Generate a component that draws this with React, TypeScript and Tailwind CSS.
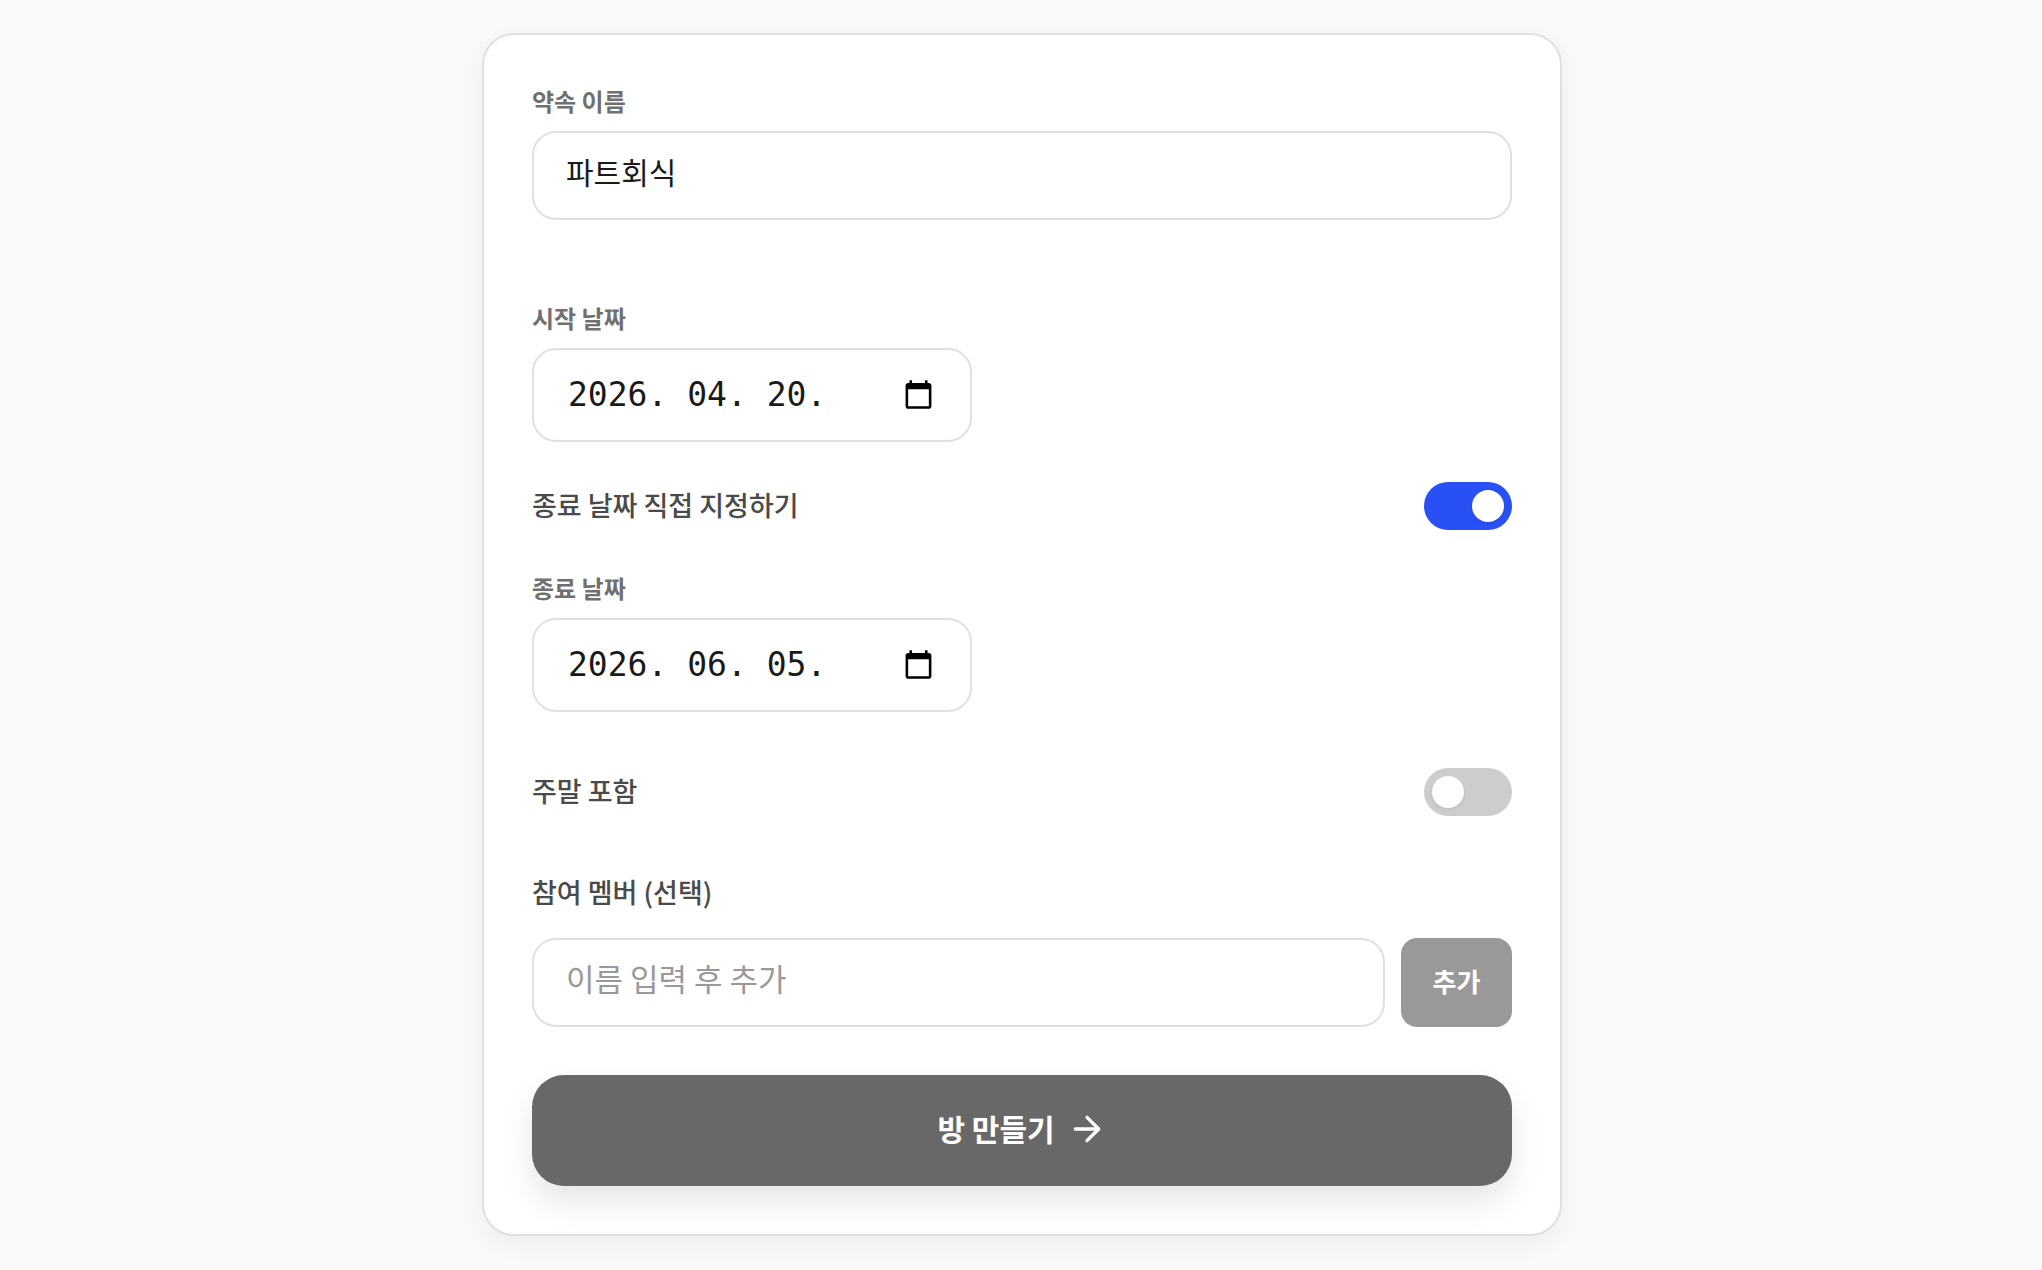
import React, { useState } from 'react';
import { ArrowRight } from 'lucide-react';

interface FieldProps {
  id: string;
  label: string;
  children: React.ReactNode;
}

const Field: React.FC<FieldProps> = ({ id, label, children }) => (
  <div className="flex flex-col gap-3">
    <label htmlFor={id} className="text-[24px] leading-9 font-bold text-[#707070]">{label}</label>
    {children}
  </div>
);

interface DateInputProps {
  id: string;
  value: string;
  onChange: (value: string) => void;
}

const DateInput: React.FC<DateInputProps> = ({ id, value, onChange }) => (
  <div className="flex items-center w-full max-w-[440px] py-5 pl-[34px] pr-9 bg-white border-2 border-[#e0e0e0] rounded-3xl">
    <input
      id={id}
      type="text"
      inputMode="numeric"
      value={value}
      onChange={e => onChange(e.target.value)}
      className="flex-1 min-w-0 bg-transparent outline-none text-[33px] leading-[50px] text-[#1a1a1a] font-['DejaVu_Sans_Mono',monospace]"
    />
    <button type="button" aria-label="달력 열기" className="shrink-0 pb-0.5">
      <svg width="31" height="31" viewBox="0 0 24 24" fill="black">
        <path d="M20 3h-1V1h-2v2H7V1H5v2H4c-1.1 0-2 .9-2 2v16c0 1.1.9 2 2 2h16c1.1 0 2-.9 2-2V5c0-1.1-.9-2-2-2zm0 18H4V8h16v13z" />
      </svg>
    </button>
  </div>
);

interface ToggleRowProps {
  label: string;
  checked: boolean;
  onChange: (checked: boolean) => void;
}

const ToggleRow: React.FC<ToggleRowProps> = ({ label, checked, onChange }) => (
  <label className="flex items-center justify-between cursor-pointer">
    <span className="pb-0.5 text-[27px] leading-10 font-medium text-[#4a4a4a]">{label}</span>
    <input
      type="checkbox"
      role="switch"
      checked={checked}
      onChange={e => onChange(e.target.checked)}
      className="appearance-none flex items-center w-[88px] h-12 px-2 rounded-full cursor-pointer bg-[#cdcdcd] checked:bg-[#2850f5] checked:justify-end before:content-[''] before:block before:size-8 before:rounded-full before:bg-white before:shadow-[0_2px_4px_rgba(0,0,0,0.06)]"
    />
  </label>
);

const inputStyle = "w-full min-w-0 pt-4 pb-6 px-8 bg-white border-2 border-[#e0e0e0] rounded-3xl outline-none text-[30px] leading-[45px] text-[#1a1a1a] placeholder:text-[31px] placeholder:text-[#999999]";

const App: React.FC = () => {
  const [name, setName] = useState('파트회식');
  const [startDate, setStartDate] = useState('2026. 04. 20.');
  const [endDate, setEndDate] = useState('2026. 06. 05.');
  const [customEnd, setCustomEnd] = useState(true);
  const [weekend, setWeekend] = useState(false);
  const [member, setMember] = useState('');

  return (
    <div className="min-h-screen pt-[33px] pb-8 pl-0.5 bg-[#f9f9f9] font-['Noto_Sans_CJK_KR',sans-serif]">
      <form
        onSubmit={e => e.preventDefault()}
        className="w-full max-w-[1080px] mx-auto p-12 flex flex-col bg-white border-2 border-[#e0e0e0] rounded-4xl shadow-[0_8px_24px_rgba(0,0,0,0.05)]"
      >
        <Field id="name" label="약속 이름">
          <input id="name" type="text" value={name} onChange={e => setName(e.target.value)} className={inputStyle} />
        </Field>

        <div className="flex flex-col gap-10 mt-20">
          <Field id="start-date" label="시작 날짜">
            <DateInput id="start-date" value={startDate} onChange={setStartDate} />
          </Field>
          <ToggleRow label="종료 날짜 직접 지정하기" checked={customEnd} onChange={setCustomEnd} />
          {customEnd && (
            <Field id="end-date" label="종료 날짜">
              <DateInput id="end-date" value={endDate} onChange={setEndDate} />
            </Field>
          )}
        </div>

        <div className="flex flex-col gap-14 mt-14">
          <ToggleRow label="주말 포함" checked={weekend} onChange={setWeekend} />
          <div className="flex flex-col gap-6">
            <label htmlFor="member" className="pb-0.5 text-[27px] leading-10 font-medium text-[#4a4a4a]">참여 멤버 (선택)</label>
            <div className="flex gap-4">
              <input
                id="member"
                type="text"
                placeholder="이름 입력 후 추가"
                value={member}
                onChange={e => setMember(e.target.value)}
                className={inputStyle}
              />
              <button type="button" className="shrink-0 w-[111px] pb-1 rounded-2xl bg-[#999999] text-[26px] font-bold text-white">추가</button>
            </div>
          </div>
        </div>

        <button
          type="submit"
          className="flex items-center justify-center gap-3 mt-12 pt-[30px] pb-[34px] rounded-4xl bg-[#686868] text-[30px] leading-[47px] font-bold text-white shadow-[0_16px_32px_rgba(0,0,0,0.1)]"
        >
          방 만들기
          <ArrowRight className="size-10" />
        </button>
      </form>
    </div>
  );
};

export default App;
